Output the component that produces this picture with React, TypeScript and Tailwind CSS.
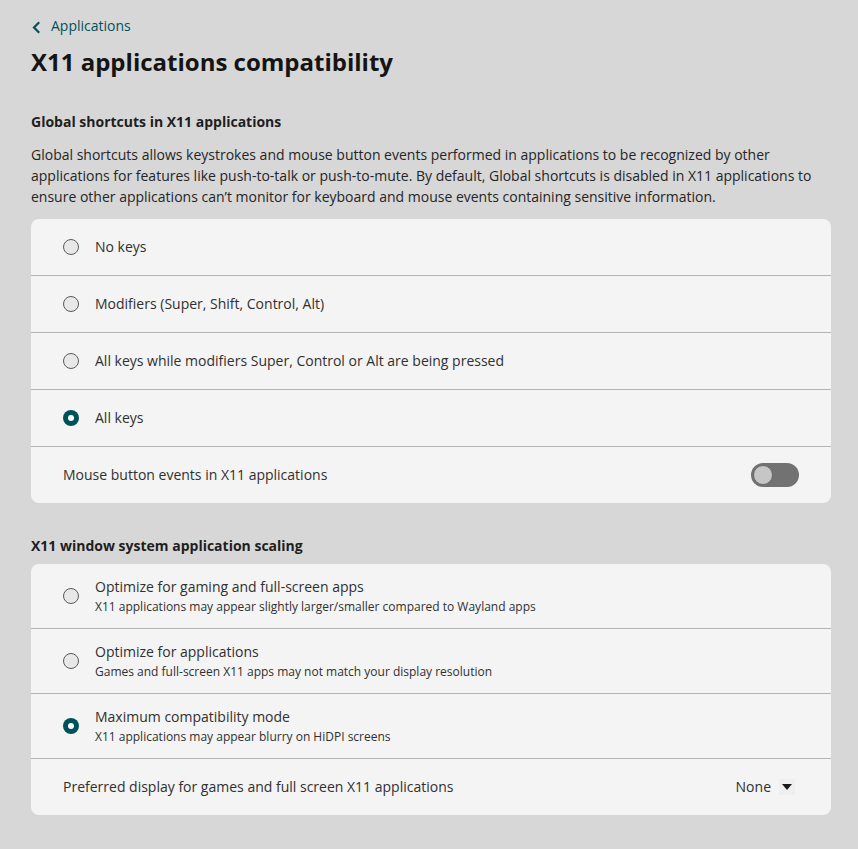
import { useState } from 'react';

type Option = { label: string; description?: string };

const shortcutOptions: Option[] = [
  { label: 'No keys' },
  { label: 'Modifiers (Super, Shift, Control, Alt)' },
  { label: 'All keys while modifiers Super, Control or Alt are being pressed' },
  { label: 'All keys' },
];

const scalingOptions: Option[] = [
  {
    label: 'Optimize for gaming and full-screen apps',
    description: 'X11 applications may appear slightly larger/smaller compared to Wayland apps',
  },
  {
    label: 'Optimize for applications',
    description: 'Games and full-screen X11 apps may not match your display resolution',
  },
  {
    label: 'Maximum compatibility mode',
    description: 'X11 applications may appear blurry on HiDPI screens',
  },
];

function Radio({ checked }: { checked: boolean }) {
  if (checked) {
    return (
      <span className="flex h-4 w-4 shrink-0 items-center justify-center rounded-full bg-[#00525a]">
        <span className="h-[6px] w-[6px] rounded-full bg-white" />
      </span>
    );
  }
  return <span className="h-4 w-4 shrink-0 rounded-full border border-[#5a5a5a] bg-[#e8e8e8]" />;
}

function Toggle({ on, onChange }: { on: boolean; onChange: () => void }) {
  return (
    <button
      onClick={onChange}
      className={`flex h-6 w-12 items-center rounded-full px-[2px] ${on ? 'bg-[#00525a] justify-end' : 'bg-[#727272]'}`}
    >
      <span className="h-5 w-5 rounded-full border border-[#6a6a6a] bg-[#c6c6c6]" />
    </button>
  );
}

function Divider() {
  return <div className="h-px bg-[#b4b4b4]" />;
}

export default function App() {
  const [shortcut, setShortcut] = useState(3);
  const [scaling, setScaling] = useState(2);
  const [mouseEvents, setMouseEvents] = useState(false);

  return (
    <div
      className="min-h-[849px] bg-[#d7d7d7] pl-[31px] pt-4 text-[#1e1e1e]"
      style={{ fontFamily: '"Open Sans", "Noto Sans", sans-serif' }}
    >
      <div className="w-[800px]">
        <button className="flex h-5 items-center gap-[10px] text-sm text-[#00525a]">
          <svg width="10" height="13" viewBox="0 0 10 13" className="mt-[2px]">
            <path d="M8.2 1.2 3 6.5l5.2 5.3" fill="none" stroke="#00525a" strokeWidth="2.2" />
          </svg>
          Applications
        </button>
        <h1 className="mt-[10px] text-2xl leading-8 font-bold text-[#141414]">X11 applications compatibility</h1>

        <h2 className="mt-[34px] text-sm leading-5 font-bold">Global shortcuts in X11 applications</h2>
        <p className="mt-3 text-sm leading-[21px] text-[#252525]">
          Global shortcuts allows keystrokes and mouse button events performed in applications to be recognized by other
          applications for features like push-to-talk or push-to-mute. By default, Global shortcuts is disabled in X11
          applications to ensure other applications can’t monitor for keyboard and mouse events containing sensitive
          information.
        </p>

        <div className="mt-3 overflow-hidden rounded-lg bg-[#f4f4f4]">
          {shortcutOptions.map((opt, i) => (
            <div key={opt.label}>
              <div
                onClick={() => setShortcut(i)}
                className="flex h-14 cursor-pointer items-center gap-4 px-8 text-sm text-[#303030]"
              >
                <Radio checked={shortcut === i} />
                <span>{opt.label}</span>
              </div>
              <Divider />
            </div>
          ))}
          <div className="flex h-14 items-center justify-between px-8 text-sm text-[#303030]">
            <span>Mouse button events in X11 applications</span>
            <Toggle on={mouseEvents} onChange={() => setMouseEvents(!mouseEvents)} />
          </div>
        </div>

        <h2 className="mt-[33px] text-sm leading-5 font-bold">X11 window system application scaling</h2>
        <div className="mt-2 overflow-hidden rounded-lg bg-[#f4f4f4]">
          {scalingOptions.map((opt, i) => (
            <div key={opt.label}>
              <div
                onClick={() => setScaling(i)}
                className="flex h-16 cursor-pointer items-center gap-4 px-8 text-[#303030]"
              >
                <Radio checked={scaling === i} />
                <div className="flex flex-col">
                  <span className="text-sm leading-5">{opt.label}</span>
                  <span className="mt-[2px] text-xs leading-4">{opt.description}</span>
                </div>
              </div>
              <Divider />
            </div>
          ))}
          <div className="flex h-14 items-center justify-between px-8 text-sm text-[#303030]">
            <span>Preferred display for games and full screen X11 applications</span>
            <div className="mr-1 flex items-center gap-2">
              <span>None</span>
              <span className="flex h-4 w-4 items-center justify-center bg-[#efefef]">
                <svg width="10" height="6" viewBox="0 0 10 6">
                  <path d="M0 0h10L5 6z" fill="#1a1a1a" />
                </svg>
              </span>
            </div>
          </div>
        </div>
      </div>
    </div>
  );
}
